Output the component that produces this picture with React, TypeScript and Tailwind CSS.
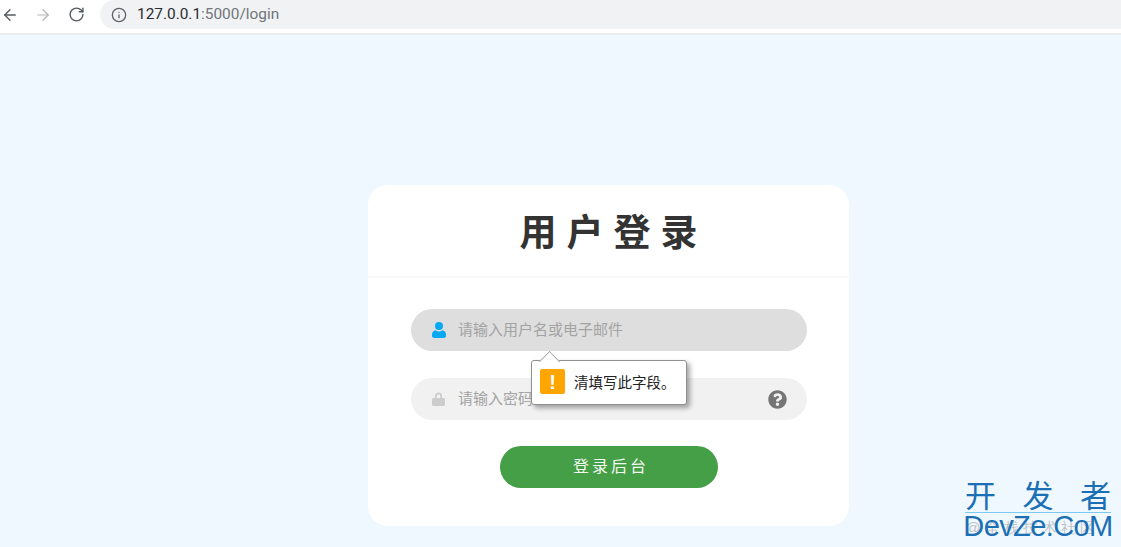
import { ArrowLeft, ArrowRight, RotateCw, Info } from "lucide-react";
import { FaQuestionCircle } from "react-icons/fa";

const cjk = "font-['Liberation_Sans','Noto_Sans_CJK_SC',sans-serif]";

function UserIcon() {
  return (
    <svg width="14" height="16" viewBox="0 0 14 16" className="shrink-0 text-[#03a9f4]" fill="currentColor">
      <circle cx="7" cy="4" r="4" />
      <path d="M3.6 8.2C4.6 9 5.7 9.4 7 9.4s2.4-.4 3.4-1.2C12.6 8.7 14 10.4 14 12.6v1.2c0 1.3-.9 2.2-2.2 2.2H2.2C.9 16 0 15.1 0 13.8v-1.2c0-2.2 1.4-3.9 3.6-4.4z" />
    </svg>
  );
}

function LockIcon() {
  return (
    <svg width="13" height="14" viewBox="0 0 13 14" className="shrink-0 text-[#cccccc]" fill="currentColor">
      <path d="M3 6V4a3.5 3.5 0 0 1 7 0v2h1.6c.8 0 1.4.6 1.4 1.4v5.2c0 .8-.6 1.4-1.4 1.4H1.4C.6 14 0 13.4 0 12.6V7.4C0 6.6.6 6 1.4 6H3zm1.8 0h3.4V4a1.7 1.7 0 0 0-3.4 0v2z" />
    </svg>
  );
}

export default function App() {
  return (
    <div className={`relative flex h-[547px] w-[1121px] flex-col overflow-hidden bg-[#f0f8ff] ${cjk}`}>
      <header className="flex h-[35px] shrink-0 items-start border-b-2 border-[#e9edf0] bg-white">
        <div className="flex h-[29px] w-[100px] items-center pl-[1px] text-[#555a5e]">
          <ArrowLeft size={18} strokeWidth={1.8} />
          <ArrowRight size={18} strokeWidth={1.6} className="ml-[15px] text-[#b3b5b7]" />
          <RotateCw size={17} strokeWidth={2} className="ml-[16px]" />
        </div>
        <div className="flex h-[29px] flex-1 items-center rounded-l-[15px] bg-[#f1f2f4] pl-[11px]">
          <Info size={16} strokeWidth={2} className="text-[#5f6368]" />
          <span className="mt-[1px] ml-[10px] font-['Roboto',sans-serif] text-[15.4px] text-[#2b2e31]">
            127.0.0.1<span className="text-[#70757a]">:5000/login</span>
          </span>
        </div>
      </header>

      <main className="flex flex-1 justify-center pt-[150px] pl-[96px]">
        <section className="h-[341px] w-[481px] rounded-[20px] bg-white">
          <h1 className="flex h-[93px] items-center justify-center border-b-2 border-[#f7f8f9] pt-[5px] pl-[10px] text-[37px] leading-none font-bold tracking-[10px] text-[#333333]">
            用户登录
          </h1>
          <form className="flex flex-col pt-[31px] pr-[42px] pl-[43px]">
            <div className="flex h-[42px] items-center rounded-full bg-[#dedede] pl-[21px]">
              <UserIcon />
              <span className="ml-[12px] text-[15px] text-[#a3a3a3]">请输入用户名或电子邮件</span>
            </div>
            <div className="relative mt-[27px] flex h-[42px] items-center rounded-full bg-[#f1f1f1] pl-[21px]">
              <LockIcon />
              <span className="ml-[14px] -translate-x-[1px] text-[15px] text-[#a3a3a3]">请输入密码</span>
              <FaQuestionCircle className="absolute right-[20px] h-[19px] w-[19px] text-[#757575]" />

              <div className="absolute top-[-18px] left-[120px] flex h-[45px] w-[156px] items-center rounded-[3px] border border-[#8f8f8f] bg-white pl-[8px] shadow-[3px_3px_5px_rgba(0,0,0,0.35)]">
                <span className="absolute top-[-8px] left-[10px] h-[15px] w-[15px] translate-y-[1px] rotate-45 border-t border-l border-[#a8a8a8] bg-white" />
                <span className="relative mb-[2px] flex h-[25px] w-[25px] items-center justify-center rounded-[2px] bg-[#ffa500] text-[20px] leading-none font-bold text-white">
                  !
                </span>
                <span className="relative mt-[2px] ml-[9px] text-[14.5px] whitespace-nowrap text-[#222222]">清填写此字段。</span>
              </div>
            </div>
            <button
              type="button"
              className="mx-auto mt-[26px] flex h-[42px] w-[218px] items-center justify-center rounded-full bg-[#449f47] pl-[4px] text-[16px] tracking-[3px] text-[#f4f8f2]"
            >
              登录后台
            </button>
          </form>
        </section>
      </main>

      <div className="absolute top-[481px] left-[965px] flex w-[146px] flex-col items-center text-[#1a6fb5]">
        <div className="flex h-[31px] w-full items-center justify-between text-[31px] leading-none">
          <span>开</span>
          <span>发</span>
          <span>者</span>
        </div>
        <div className="h-px w-full bg-[#7cc8f0]" />
        <div className="relative h-[27px] font-['Liberation_Sans',sans-serif] text-[29px] leading-[27px] tracking-[-0.6px] whitespace-nowrap">
          <span className="absolute top-[1px] left-[2px] text-[15px] tracking-[4px] text-[#8a8a8a]/50">@全栈技术社区</span>
          <span className="relative">DevZe.CoM</span>
        </div>
      </div>
    </div>
  );
}
